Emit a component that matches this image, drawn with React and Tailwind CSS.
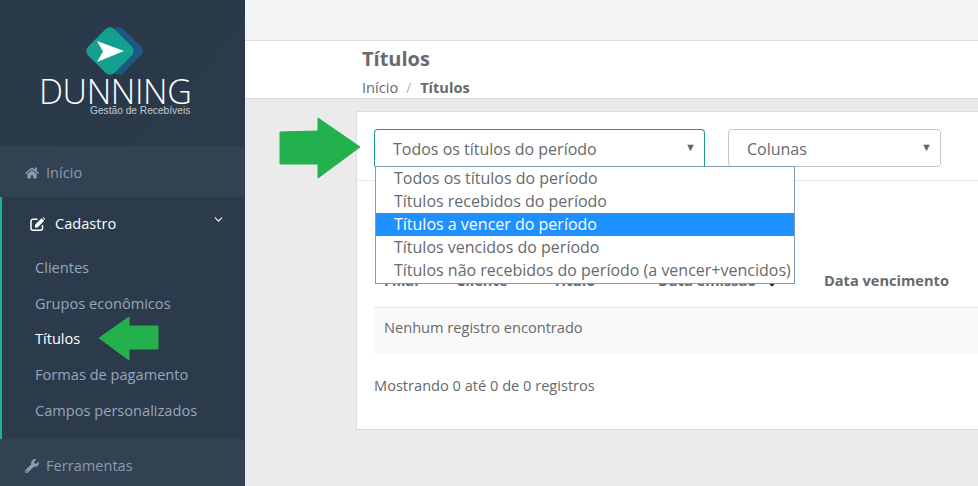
import { FaHome, FaWrench, FaSortDown } from "react-icons/fa";
import { ChevronDown } from "lucide-react";

const subItems = ["Clientes", "Grupos econômicos", "Títulos", "Formas de pagamento", "Campos personalizados"];
const options = [
  "Todos os títulos do período",
  "Títulos recebidos do período",
  "Títulos a vencer do período",
  "Títulos vencidos do período",
  "Títulos não recebidos do período (a vencer+vencidos)",
];

function EditIcon() {
  return (
    <svg width="16" height="14" viewBox="0 0 16 14" className="mr-[9px] shrink-0">
      <path d="M7.5 2.2H3a2 2 0 0 0-2 2v7a2 2 0 0 0 2 2h7.5a2 2 0 0 0 2-2V8" fill="none" stroke="#fff" strokeWidth="1.5" />
      <polygon points="5,7.8 11.6,1.2 14.2,3.8 7.6,10.4 5,10.6" fill="#fff" />
      <polygon points="12.4,0.6 13.6,0.4 15,1.8 14.9,3 " fill="#fff" />
    </svg>
  );
}

function Logo() {
  return (
    <div className="relative h-[146px] bg-[#293949] overflow-hidden">
      <svg className="absolute inset-0" width="245" height="146">
        <polygon points="0,0 130,0 60,146 0,146" fill="#2a3a4a" />
        <polygon points="130,146 245,20 245,146" fill="#2b3b4c" />
      </svg>
      <div className="relative flex flex-col pt-[24px]">
        <svg width="64" height="54" viewBox="0 0 64 54" className="ml-[82px]">
          <rect x="18.5" y="8.5" width="37" height="37" rx="6" transform="rotate(45 37 27)" fill="#1c5a86" />
          <rect x="9.5" y="8.5" width="37" height="37" rx="6" transform="rotate(45 28 27)" fill="#14a08e" />
          <polygon points="15,17 42,27 15,38 21,27.5" fill="#ffffff" />
        </svg>
        <span className="ml-[39px] font-['Open_Sans'] font-light text-[34px] leading-[26px] tracking-[-0.4px] text-white">DUNNING</span>
        <span className="ml-[90px] mt-[1px] font-['Liberation_Sans'] text-[10.2px] leading-[12px] text-[#c3c9cf]">Gestão de Recebíveis</span>
      </div>
    </div>
  );
}

function Sidebar() {
  return (
    <aside className="w-[245px] shrink-0 h-full bg-[#2b3b4b] flex flex-col">
      <Logo />
      <div className="h-[51px] bg-[#324252] flex items-center pl-[25px] pt-[2px] gap-[7px] text-[#8c9bb0] text-[14.6px]">
        <FaHome className="text-[14px] text-[#8c9bb0]" />
        <span>Início</span>
      </div>
      <div className="h-[242px] border-l-2 border-[#1ab394] bg-[#2b3b4b]">
        <div className="h-[51px] flex items-center pl-[28px] pr-[20px] pt-[2px] text-white text-[14.6px]">
          <EditIcon />
          <span>Cadastro</span>
          <ChevronDown size={13} strokeWidth={2} className="ml-auto -mt-[8px]" />
        </div>
        <ul className="pl-[33px] pt-[2px]">
          {subItems.map((item) => (
            <li key={item} className={`h-[35.7px] flex items-center text-[14.6px] ${item === "Títulos" ? "text-white" : "text-[#98a6b8]"}`}>
              {item}
            </li>
          ))}
        </ul>
      </div>
      <div className="flex-1 bg-[#324252] flex items-start pt-[16px] pl-[25px] gap-[7px] text-[#8c9bb0] text-[14.6px]">
        <FaWrench className="text-[14px] mt-[4px]" />
        <span>Ferramentas</span>
      </div>
    </aside>
  );
}

function Selects() {
  return (
    <div className="flex gap-[23px] pl-[17px] pt-[17px] h-[69px] border-b border-[#e7eaec]">
      <div className="w-[331px] h-[38px] border border-[#1a9c8a] border-b-transparent rounded-t-[4px] flex items-center pl-[18px] pr-[8px] text-[#676a6c] text-base">
        <span className="mt-[1px]">Todos os títulos do período</span>
        <span className="ml-auto text-[11px] -mt-[2px] text-[#666]">▼</span>
      </div>
      <div className="w-[213px] h-[38px] border border-[#c4c6c8] rounded-[4px] flex items-center pl-[18px] pr-[8px] text-[#676a6c] text-base">
        <span className="mt-[1px]">Colunas</span>
        <span className="ml-auto text-[11px] -mt-[2px] text-[#666]">▼</span>
      </div>
    </div>
  );
}

function DataTable() {
  return (
    <div className="pl-[17px]">
      <div className="h-[127px] flex items-end pl-[10px] pb-[15px] border-b border-[#e7eaec] text-[14.6px] font-bold text-[#676a6c]">
        <span className="w-[72px]">Filial</span>
        <span className="w-[97px]">Cliente</span>
        <span className="w-[105px]">Título</span>
        <span className="w-[166px] flex items-center">
          Data emissão
          <FaSortDown className="ml-[9px] text-[14px] text-[#222]" />
        </span>
        <span>Data vencimento</span>
      </div>
      <div className="h-[46px] bg-[#f9f9f9] flex items-start pt-[9px] pl-[10px] text-[14.6px] text-[#676a6c]">Nenhum registro encontrado</div>
      <div className="pt-[21px] text-[14.6px] text-[#676a6c]">Mostrando 0 até 0 de 0 registros</div>
    </div>
  );
}

function Dropdown() {
  return (
    <ul className="absolute left-[18px] top-[54px] w-[420px] h-[118px] bg-white border border-[#7f9db9] text-base leading-[23px] text-[#676a6c] z-10 overflow-hidden">
      {options.map((option, i) => (
        <li key={option} className={`h-[23px] pl-[18px] whitespace-nowrap ${i === 2 ? "bg-[#1e90ff] text-white" : ""}`}>
          {option}
        </li>
      ))}
    </ul>
  );
}

export default function App() {
  return (
    <div className="relative flex w-[978px] h-[486px] overflow-hidden font-['Open_Sans',sans-serif]">
      <Sidebar />
      <main className="flex-1 flex flex-col bg-[#ebebeb]">
        <div className="h-[41px] bg-[#f2f3f5] border-b border-[#dcdcdc]" />
        <header className="h-[58px] bg-white border-b border-[#dcdcdc] pl-[117px] pt-[4px]">
          <h1 className="text-xl leading-[27px] font-bold text-[#676a6c]">Títulos</h1>
          <p className="text-[14.6px] leading-[20px] mt-[5px] text-[#676a6c]">
            Início <span className="text-[#b5b5b5] ml-[4px] mr-[5px]">/</span> <b>Títulos</b>
          </p>
        </header>
        <section className="pl-[111px] pt-[12px]">
          <div className="relative bg-white border border-r-0 border-[#dcdcdc] h-[319px]">
            <Selects />
            <DataTable />
            <Dropdown />
          </div>
        </section>
      </main>
      <svg className="absolute left-[279px] top-[117px]" width="83" height="62" viewBox="0 0 83 62">
        <polygon points="1,15 39,14 39,1 81,30 39,61 39,47 1,47" fill="#22b14c" stroke="#22b14c" strokeLinejoin="round" />
      </svg>
      <svg className="absolute left-[98px] top-[316px]" width="62" height="46" viewBox="0 0 62 46">
        <polygon points="1,22 31,1 31,10 60,10 60,33 31,33 31,44" fill="#22b14c" stroke="#22b14c" strokeLinejoin="round" />
      </svg>
    </div>
  );
}
